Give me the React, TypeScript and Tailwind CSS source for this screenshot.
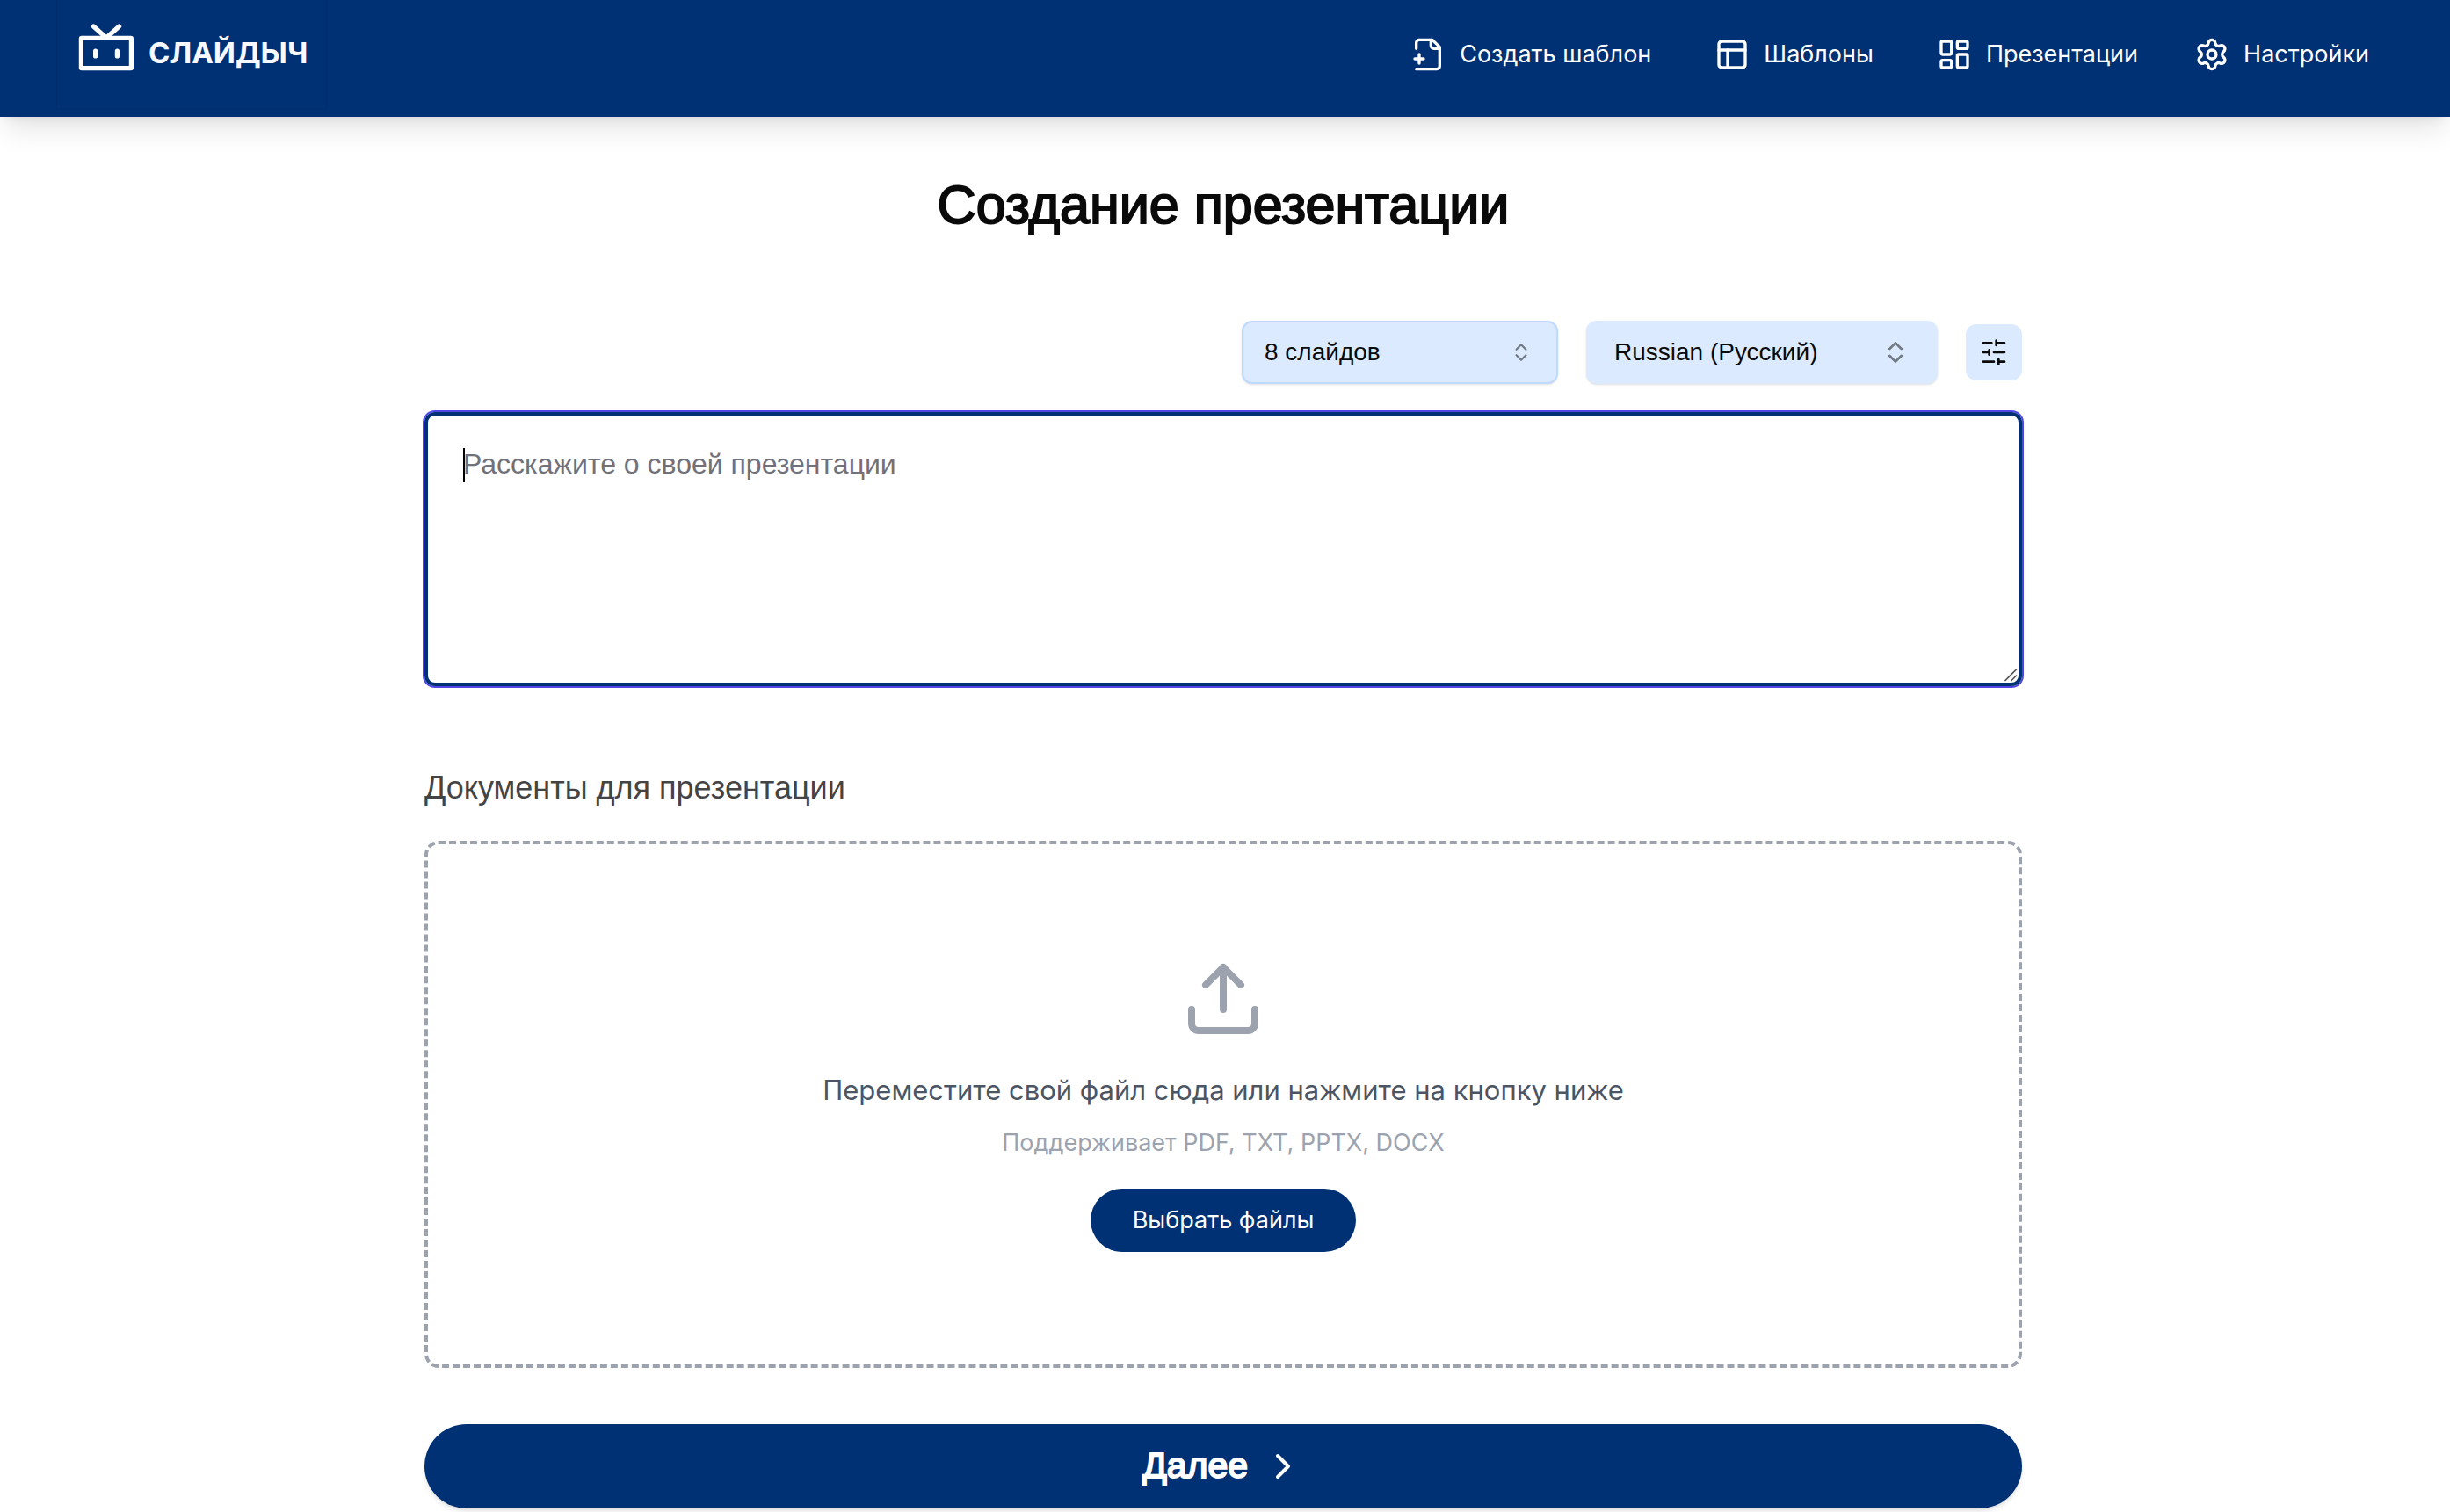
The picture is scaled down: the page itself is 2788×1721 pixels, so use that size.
import type { ReactNode } from 'react'
import { ChevronRight, ChevronsUpDown, LayoutDashboard, PanelsTopLeft, Settings, Upload } from 'lucide-react'

function Logo() {
  return (
    <a href="#" className="flex h-[124px] w-[308px] items-start border border-t-0 border-[#002c6b] pt-[26px] pl-[24px]">
      <svg viewBox="0 0 64 56" className="h-14 w-16 shrink-0" fill="none" stroke="#fff" strokeWidth="5.2" strokeLinecap="round" strokeLinejoin="round" aria-hidden="true">
        <rect x="3.4" y="17.4" width="57" height="34.2" rx="0.6" />
        <path d="M17.4 4 32 17 46.6 4" />
        <path d="M19.6 32v6M44.4 32v6" />
      </svg>
      <span className="ml-4 pt-[10px] text-[33px] leading-[48px] font-bold text-[#f8f9ff]">СЛАЙДЫЧ</span>
    </a>
  )
}

function FilePlusIcon() {
  return (
    <svg viewBox="0 0 24 24" className="size-10" fill="none" stroke="currentColor" strokeWidth="2" strokeLinecap="round" strokeLinejoin="round" aria-hidden="true">
      <path d="M4 22h14a2 2 0 0 0 2-2V7l-5-5H6a2 2 0 0 0-2 2v4" />
      <path d="M14 2v4a2 2 0 0 0 2 2h4" />
      <path d="M3 15h6M6 12v6" />
    </svg>
  )
}

function SlidersIcon() {
  return (
    <svg viewBox="0 0 24 24" className="size-8" fill="none" stroke="currentColor" strokeWidth="2" strokeLinecap="round" strokeLinejoin="round" aria-hidden="true">
      <path d="M21 4h-7M10 4H3M21 12h-9M8 12H3M21 20h-5M12 20H3M14 2v4M8 10v4M16 18v4" />
    </svg>
  )
}

function NavLink({ icon, children }: { icon: ReactNode; children: ReactNode }) {
  return (
    <a href="#" className="flex items-center gap-4 text-[27px] leading-10 whitespace-nowrap">
      {icon}
      <span>{children}</span>
    </a>
  )
}

export default function App() {
  return (
    <div className="min-h-screen bg-white font-['Inter',sans-serif] text-[#0a0a0a]">
      <header className="relative z-10 flex items-center justify-between bg-[#003174] pr-[92px] pb-[9px] pl-16 text-white shadow-[0_20px_30px_-6px_rgba(0,0,0,0.1),0_8px_12px_-8px_rgba(0,0,0,0.1)]">
        <Logo />
        <nav className="flex items-center gap-16">
          <div className="flex items-center gap-[72px]">
            <NavLink icon={<FilePlusIcon />}>Создать шаблон</NavLink>
            <NavLink icon={<PanelsTopLeft className="size-10" />}>Шаблоны</NavLink>
            <NavLink icon={<LayoutDashboard className="size-10" />}>Презентации</NavLink>
          </div>
          <NavLink icon={<Settings className="size-10" />}>Настройки</NavLink>
        </nav>
      </header>

      <main className="pr-1 pb-1">
        <div className="mx-auto flex w-full max-w-[1818px] flex-col pt-[60px] font-['Liberation_Sans',sans-serif]">
          <h1 className="text-center text-[61px] leading-[80px] [-webkit-text-stroke:2px_#0a0a0a]">Создание презентации</h1>

          <div className="mt-[92px] flex items-center justify-end gap-8">
            <div className="relative w-[360px]">
              <select aria-label="Количество слайдов" className="h-[72px] w-full appearance-none rounded-xl border-2 border-[#bedbff] bg-[#dbeafe] px-6 text-[28px] shadow-sm outline-none">
                <option>8 слайдов</option>
              </select>
              <ChevronsUpDown className="pointer-events-none absolute top-[23px] right-[29px] size-[26px] opacity-50" />
            </div>
            <div className="relative w-[400px]">
              <select aria-label="Язык" className="h-[72px] w-full appearance-none rounded-xl bg-[#dbeafe] px-8 text-[28px] shadow-sm outline-none">
                <option>Russian (Русский)</option>
              </select>
              <ChevronsUpDown className="pointer-events-none absolute top-5 right-8 size-8 opacity-50" />
            </div>
            <button type="button" aria-label="Дополнительные настройки" className="flex size-16 items-center justify-center rounded-xl bg-[#dbeafe]">
              <SlidersIcon />
            </button>
          </div>

          <div className="relative mt-8">
            <textarea
              aria-label="Описание презентации"
              placeholder="Расскажите о своей презентации"
              className="block h-[312px] w-full resize-none rounded-xl border-4 border-[#003174] px-10 py-8 text-[32px] leading-[46px] ring-2 ring-[#4f46e5] outline-none placeholder:text-[#71717b]"
            />
            <span className="pointer-events-none absolute top-[41px] left-11 h-[39px] w-0.5 bg-black" />
            <svg viewBox="0 0 16 16" className="pointer-events-none absolute right-[5px] bottom-[5px] size-4" stroke="#555" strokeWidth="1.6" fill="none" aria-hidden="true">
              <path d="M1.500 15 15 1.500M8.500 15 15 8.500" />
            </svg>
          </div>

          <h2 className="mt-[88px] text-[36px] leading-[56px] text-[#444]">Документы для презентации</h2>

          <section className="mt-8 flex h-[600px] flex-col items-center justify-center rounded-2xl border-4 border-dashed border-[#9ca3af] font-['Inter',sans-serif]">
            <Upload className="size-24 text-[#9ca3af]" />
            <p className="mt-8 text-[31px] leading-[48px] text-[#4b5563]">Переместите свой файл сюда или нажмите на кнопку ниже</p>
            <p className="mt-4 text-[27px] leading-10 text-[#9ca3af]">Поддерживает PDF, TXT, PPTX, DOCX</p>
            <button type="button" className="mt-8 h-[72px] rounded-full bg-[#003174] px-12 text-[27px] text-white">Выбрать файлы</button>
          </section>

          <button type="button" className="mt-16 flex h-24 items-center justify-center gap-4 rounded-full bg-[#003174] text-[41px] text-white shadow-md">
            <span className="[-webkit-text-stroke:2px_#fff]">Далее</span>
            <ChevronRight className="size-12" />
          </button>
        </div>
      </main>
    </div>
  )
}
